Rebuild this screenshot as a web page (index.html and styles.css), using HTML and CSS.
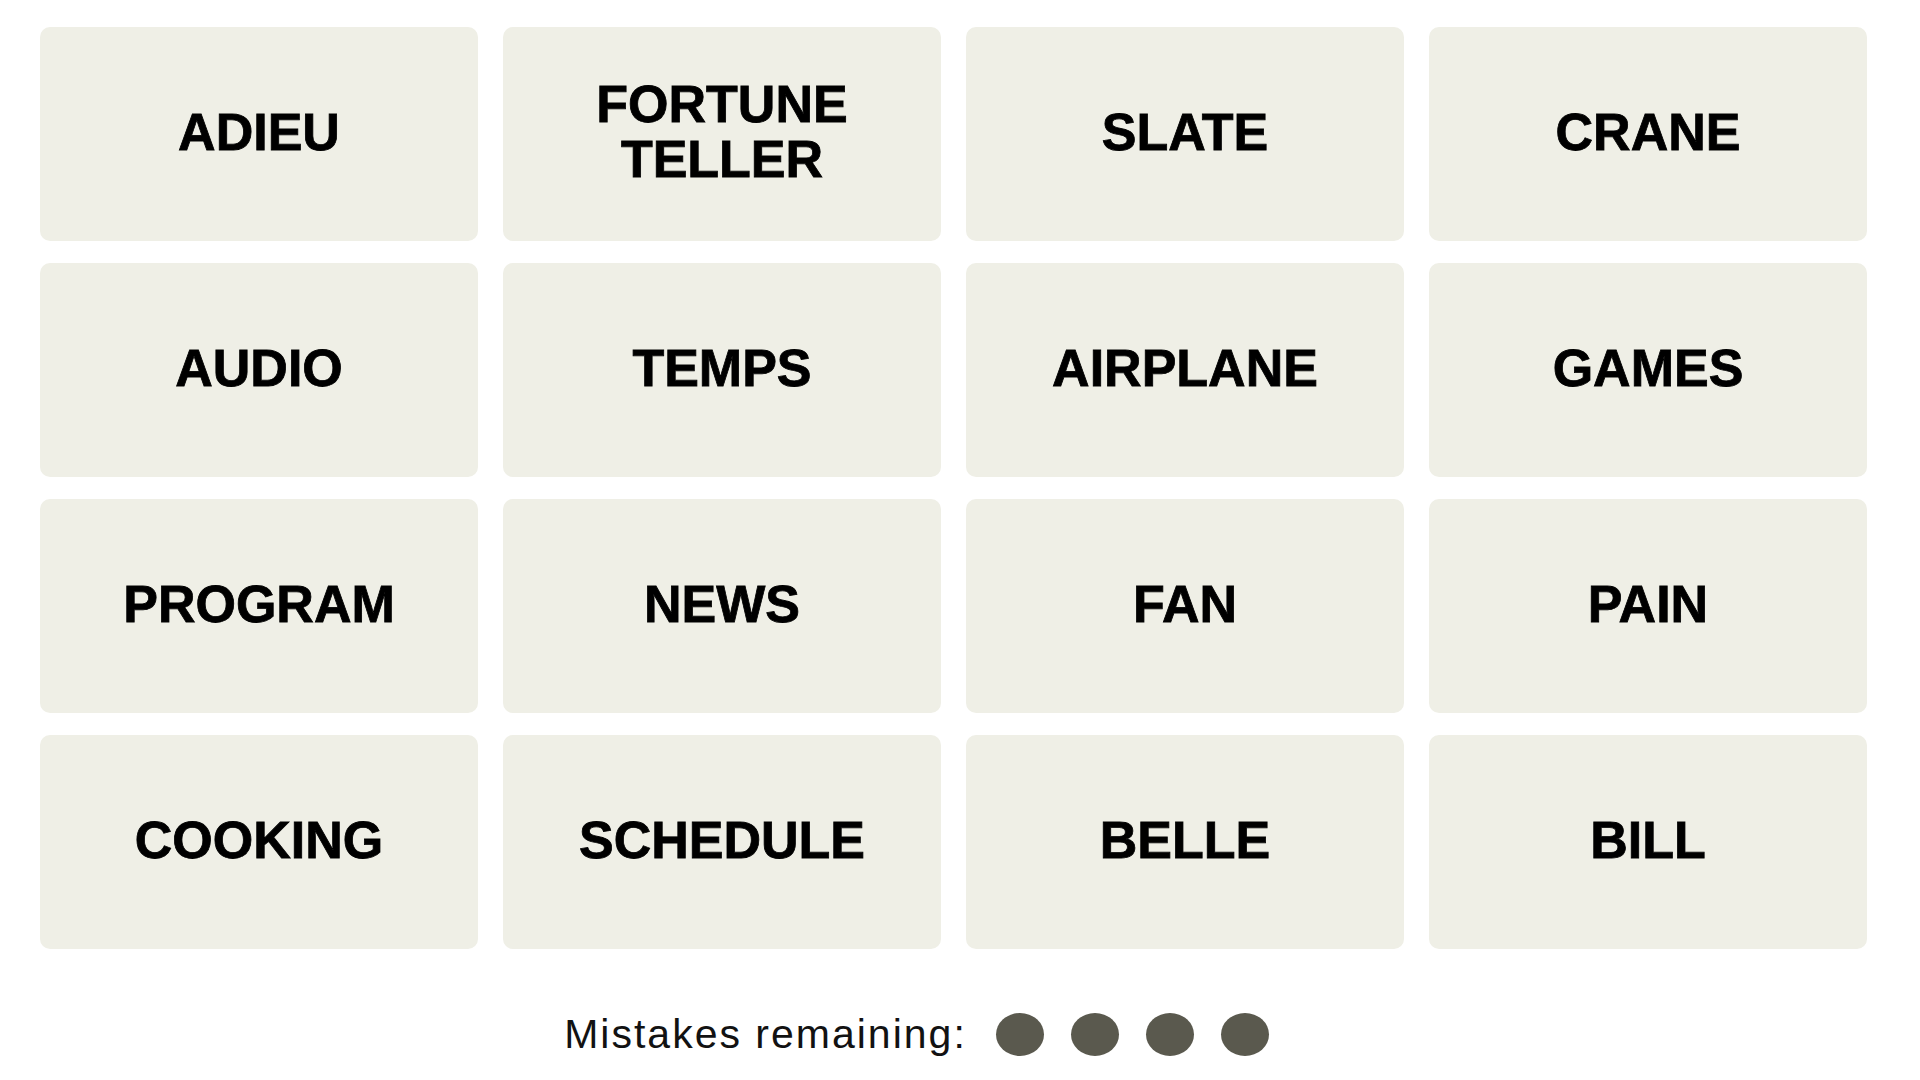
FILE: index.html
```html
<!DOCTYPE html>
<html lang="en">
<head>
  <meta charset="UTF-8">
  <meta name="viewport" content="width=device-width, initial-scale=1.0">
  <title>Connections</title>
  <link rel="stylesheet" href="styles.css">
</head>
<body>

  <main class="board">
    <!-- 4x4 word grid -->
    <div class="grid">
      <button class="tile">ADIEU</button>
      <button class="tile">FORTUNE<br>TELLER</button>
      <button class="tile">SLATE</button>
      <button class="tile">CRANE</button>

      <button class="tile">AUDIO</button>
      <button class="tile">TEMPS</button>
      <button class="tile">AIRPLANE</button>
      <button class="tile">GAMES</button>

      <button class="tile">PROGRAM</button>
      <button class="tile">NEWS</button>
      <button class="tile">FAN</button>
      <button class="tile">PAIN</button>

      <button class="tile">COOKING</button>
      <button class="tile">SCHEDULE</button>
      <button class="tile">BELLE</button>
      <button class="tile">BILL</button>
    </div>

    <!-- remaining mistakes -->
    <div class="mistakes">
      <span class="mistakes-label">Mistakes remaining:</span>
      <span class="bubbles">
        <span class="bubble"></span>
        <span class="bubble"></span>
        <span class="bubble"></span>
        <span class="bubble"></span>
      </span>
    </div>
  </main>

</body>
</html>
```

FILE: styles.css
```css
body {
  margin: 0;
  background-color: #ffffff;
  font-family: "Liberation Sans", Arial, sans-serif;
  color: #121212;
}
.board {
  padding: 27px 53px 0 40px;
}
.grid {
  display: grid;
  grid-template-columns: repeat(4, 438px);
  grid-auto-rows: 214px;
  column-gap: 25px;
  row-gap: 22px;
}
.tile {
  display: flex;
  align-items: center;
  justify-content: center;
  border: none;
  border-radius: 10px;
  background-color: #efefe6;
  color: #000;
  font-family: "Liberation Sans", Arial, sans-serif;
  font-weight: bold;
  font-size: 52px;
  line-height: 55px;
  text-align: center;
  padding: 0 0 4px;
  -webkit-text-stroke: 0.8px #000;
  cursor: pointer;
}
.mistakes {
  display: flex;
  align-items: center;
  justify-content: center;
  height: 48px;
  margin-top: 61px;
  padding-right: 74px;
}
.mistakes-label {
  font-size: 41px;
  line-height: 48px;
  letter-spacing: 2px;
  color: #121212;
}
.bubbles {
  display: flex;
  gap: 27px;
  margin-left: 29px;
}
.bubble {
  width: 48px;
  height: 43px;
  border-radius: 50%;
  background-color: #5a594e;
}
```
